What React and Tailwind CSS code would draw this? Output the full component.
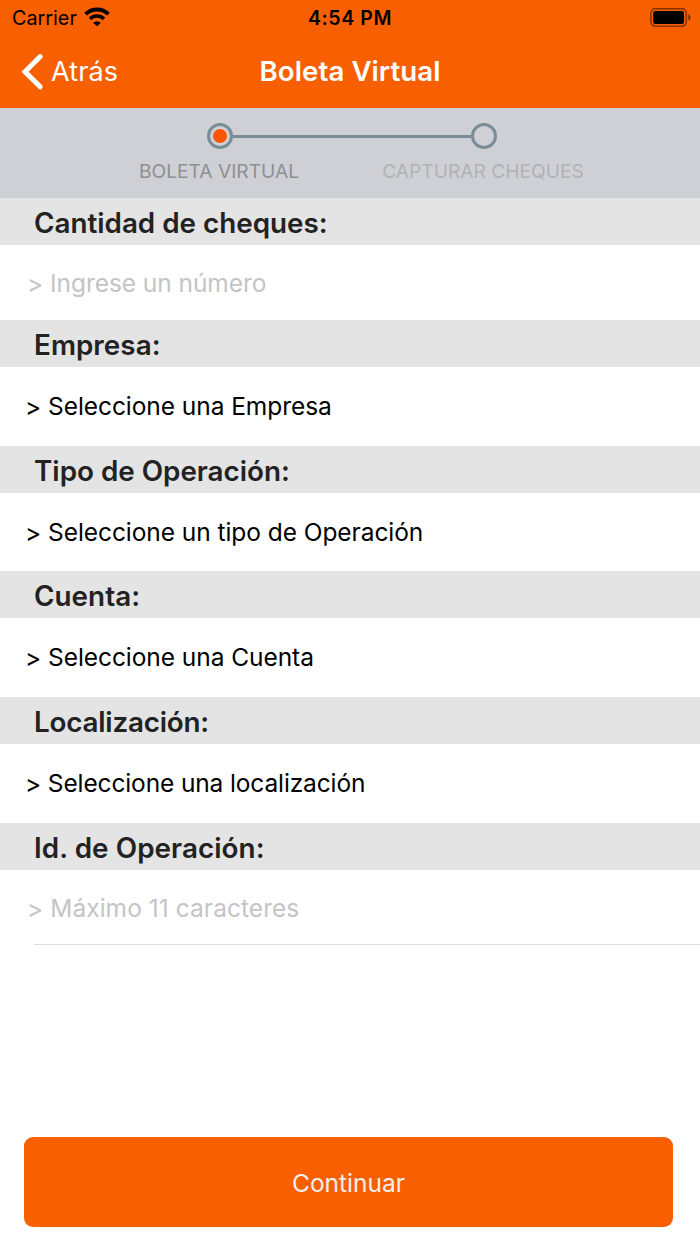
import clsx from 'clsx';

const steps = [
  { label: 'BOLETA VIRTUAL', active: true },
  { label: 'CAPTURAR CHEQUES', active: false },
];

const fields = [
  { id: 'cheques', label: 'Cantidad de cheques:', text: 'Ingrese un número', type: 'input', tracking: 'tracking-normal' },
  { id: 'empresa', label: 'Empresa:', text: 'Seleccione una Empresa', type: 'select', tracking: 'tracking-[0.05px]' },
  { id: 'tipo', label: 'Tipo de Operación:', text: 'Seleccione un tipo de Operación', type: 'select', tracking: 'tracking-normal' },
  { id: 'cuenta', label: 'Cuenta:', text: 'Seleccione una Cuenta', type: 'select', tracking: 'tracking-[0.05px]' },
  { id: 'localizacion', label: 'Localización:', text: 'Seleccione una localización', type: 'select', tracking: 'tracking-[-0.2px]', textTracking: 'tracking-[-0.13px]' },
  { id: 'operacion', label: 'Id. de Operación:', text: 'Máximo 11 caracteres', type: 'input', tracking: 'tracking-[0.08px]', textTracking: 'tracking-[0.05px]' },
];

function WifiIcon() {
  return (
    <svg width="26" height="20" viewBox="0 0 26 20" fill="none" stroke="#000" className="ml-[7px] mb-0.5">
      <path d="M1.6 7.1A16.4 16.4 0 0 1 24.4 7.1" strokeWidth="4" />
      <path d="M6 11.9A10 10 0 0 1 20 11.9" strokeWidth="3.6" />
      <path d="M13 19.2L9.2 15.7A5.4 5.4 0 0 1 16.8 15.7Z" fill="#000" stroke="none" />
    </svg>
  );
}

function BatteryIcon() {
  return (
    <svg width="42" height="20" viewBox="0 0 42 20" fill="none">
      <rect x="0.9" y="0.6" width="35.4" height="17.6" rx="4.6" stroke="#000" strokeOpacity="0.45" strokeWidth="1.6" />
      <rect x="3.2" y="2.9" width="30.8" height="13" rx="2.2" fill="#000" />
      <path d="M38.3 6.3c3 1.2 3 5 0 6.2z" fill="#000" fillOpacity="0.55" />
    </svg>
  );
}

function StatusBar() {
  return (
    <div className="grid grid-cols-3 items-center h-9 px-2 text-black">
      <div className="flex items-center pl-1">
        <span className="text-[19.8px] leading-9">Carrier</span>
        <WifiIcon />
      </div>
      <span className="text-center text-[19.5px] leading-9 font-semibold tracking-[0.6px]">4:54 PM</span>
      <div className="flex justify-end">
        <BatteryIcon />
      </div>
    </div>
  );
}

function NavBar() {
  return (
    <div className="grid grid-cols-3 items-center h-[72px] px-5 text-white">
      <button className="flex items-center gap-[7px]">
        <svg width="24" height="38" viewBox="0 0 24 38" fill="none" stroke="#fff" strokeWidth="5" strokeLinecap="round" strokeLinejoin="miter">
          <path d="M20.2 3.6L5 18.7L20.2 33.8" />
        </svg>
        <span className="text-[27px] tracking-[0.1px]">Atrás</span>
      </button>
      <h1 className="text-center text-[27.7px] font-semibold tracking-[0.05px] whitespace-nowrap">Boleta Virtual</h1>
    </div>
  );
}

function Stepper() {
  return (
    <div className="h-[90px] bg-[#cfd0d6] pt-[15px]">
      <div className="flex items-center justify-center pl-[3px]">
        {steps.map((step, i) => (
          <div key={step.label} className="flex items-center">
            {i > 0 && <div className="w-[238px] h-[3px] mt-px bg-[#7b8c99]" />}
            <div className="flex items-center justify-center size-[26px] rounded-full border-[3px] border-[#7b8c99]">
              {step.active && <div className="size-[14px] rounded-full bg-[#ff5500]" />}
            </div>
          </div>
        ))}
      </div>
      <div className="flex justify-center pl-[2px] mt-2">
        {steps.map((step) => (
          <span
            key={step.label}
            className={clsx(
              'w-[264px] text-center text-[19.2px] leading-[29px]',
              step.active ? 'text-[#8e8f91]' : 'text-[#b1b2b3]',
            )}
          >
            {step.label}
          </span>
        ))}
      </div>
    </div>
  );
}

function Field({ field }) {
  const isInput = field.type === 'input';
  return (
    <div>
      <h2 className={clsx('h-[47px] bg-[#e4e4e4] pl-[34px] text-[27.8px] leading-[51px] font-semibold text-[#222]', field.tracking)}>
        {field.label}
      </h2>
      <div
        className={clsx(
          'bg-white text-[24.5px]',
          field.textTracking || 'tracking-[-0.06px]',
          isInput ? 'h-[75.2px] pl-[27px] leading-[76px] text-[#c4c4c6]' : 'h-[78.6px] pl-[25px] leading-[79px] text-black',
        )}
      >
        <span className="inline-block translate-y-px">&gt;</span> {field.text}
      </div>
    </div>
  );
}

export default function App() {
  return (
    <div className="flex flex-col w-[700px] h-[1244px] bg-white overflow-hidden font-['Inter','Liberation_Sans',sans-serif]">
      <header className="bg-[#f85f00]">
        <StatusBar />
        <NavBar />
      </header>
      <Stepper />
      <main className="flex-1">
        {fields.map((field) => (
          <Field key={field.id} field={field} />
        ))}
        <div className="ml-[34px] -mt-px h-px bg-[#dcdcdd]" />
      </main>
      <footer className="pl-6 pr-[27px] pb-[17px]">
        <button className="w-full h-[90px] pt-[2px] rounded-[9px] bg-[#f85f00] text-[24.5px] text-[#f3eff0]">
          Continuar
        </button>
      </footer>
    </div>
  );
}
